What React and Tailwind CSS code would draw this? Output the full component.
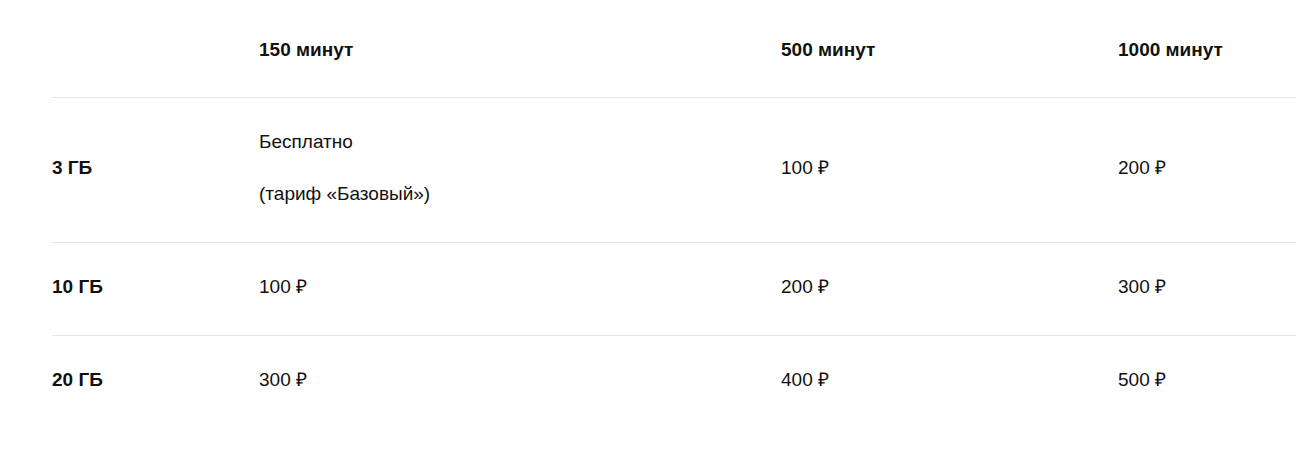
export default function App() {
  const rows = [
    { size: "3 ГБ", cells: [["Бесплатно", "(тариф «Базовый»)"], ["100 ₽"], ["200 ₽"]] },
    { size: "10 ГБ", cells: [["100 ₽"], ["200 ₽"], ["300 ₽"]] },
    { size: "20 ГБ", cells: [["300 ₽"], ["400 ₽"], ["500 ₽"]] },
  ];

  return (
    <div className="bg-white min-h-[452px] pl-[52px] text-[#111] text-[19px] leading-6" style={{ fontFamily: '"Liberation Sans", Arial, sans-serif' }}>
      {/* Шапка */}
      <div className="grid grid-cols-[207px_522px_337px_1fr] items-center pt-[38px] pb-[35px] border-b border-[#e6e6e6] font-semibold">
        <div />
        <div>150 минут</div>
        <div>500 минут</div>
        <div>1000 минут</div>
      </div>

      {rows.map((row, i) => (
        <div
          key={row.size}
          className={
            "grid grid-cols-[207px_522px_337px_1fr] items-center pt-[32px] pb-[36px] " +
            (i < rows.length - 1 ? "border-b border-[#e6e6e6]" : "")
          }
        >
          <div className="font-semibold">{row.size}</div>
          {row.cells.map((lines, j) => (
            <div key={j} className="flex flex-col gap-[28px]">
              {lines.map((line) => (
                <p key={line}>{line}</p>
              ))}
            </div>
          ))}
        </div>
      ))}
    </div>
  );
}
